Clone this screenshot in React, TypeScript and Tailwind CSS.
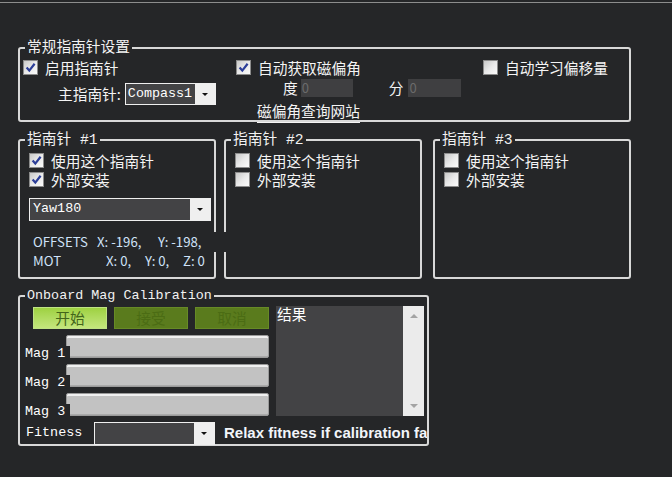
import type { ReactNode } from 'react'

const cjk = "font-['Noto_Sans_CJK_SC',sans-serif]"
const mono = "font-['Liberation_Mono','Noto_Sans_CJK_SC',monospace]"

const Check = ({ on = false }: { on?: boolean }) => (
	<span className="flex size-[15px] shrink-0 items-center justify-center border border-[#8c8c8c] bg-linear-to-br from-[#c9c9c9] via-[#e9e9e9] to-[#fbfbfb]">
		{on && (
			<svg width="11" height="11" viewBox="0 0 11 11">
				<path d="M1.6 5.6 L4.3 8.6 L9.6 1.8" fill="none" stroke="#2c3e98" strokeWidth="2.2" />
			</svg>
		)}
	</span>
)

const CheckRow = ({ on, children }: { on?: boolean; children: ReactNode }) => (
	<label className="flex h-[15px] items-center gap-[7px] leading-[16px]">
		<Check on={on} />
		<span className="whitespace-nowrap">{children}</span>
	</label>
)

const Arrow = () => (
	<span className="flex w-[20px] shrink-0 items-center justify-center bg-[#efefef]">
		<svg width="6" height="3" viewBox="0 0 6 3">
			<path d="M0 0h6L3 3z" fill="#111" />
		</svg>
	</span>
)

const Combo = ({ text, className, pad = 'pl-[2px]' }: { text?: string; className: string; pad?: string }) => (
	<div className={`flex border border-[#efefef] bg-[#434345] ${className}`}>
		<span className={`flex flex-1 items-center text-[13.4px] text-white ${mono} ${pad}`}>{text}</span>
		<Arrow />
	</div>
)

const Group = ({
	title,
	className,
	legend = 'text-[14.7px]',
	children,
}: {
	title: ReactNode
	className: string
	legend?: string
	children: ReactNode
}) => (
	<fieldset className={`min-w-0 shrink-0 rounded-[3px] border-2 border-[#d8d8d8] ${className}`}>
		<legend className={`ml-[5px] px-[2px] leading-[18px] whitespace-pre text-[#f2f2f2] ${mono} ${legend}`}>{title}</legend>
		{children}
	</fieldset>
)

const Compass = ({ n }: { n: number }) => (
	<Group title={`指南针 #${n}`} className={`h-[148px] w-[198px] ${n === 2 ? 'ml-[8px]' : n === 3 ? 'ml-[11px]' : ''}`}>
		<div className="flex flex-col gap-[4px] pt-[4px] pl-[9px]">
			<CheckRow on={n === 1}>使用这个指南针</CheckRow>
			<CheckRow on={n === 1}>外部安装</CheckRow>
		</div>
		{n === 1 && (
			<div className="pl-[9px]">
				<Combo text="Yaw180" className="mt-[11px] h-[23px] w-[182px]" pad="pl-[3px]" />
				<div className="mt-[11px] text-[13.2px] text-[#cfe2f8]">
					<div className="relative z-10 flex h-[20px] w-[201px] bg-[#252628] pl-[4px] leading-[20px] whitespace-nowrap">
						<span className="w-[64px]">OFFSETS</span>
						<span className="w-[61px]">X: -196,</span>
						<span>Y: -198,</span>
					</div>
					<div className="flex pl-[4px] leading-[18px] whitespace-nowrap">
						<span className="w-[73px]">MOT</span>
						<span className="w-[39px]">X: 0,</span>
						<span className="w-[38px]">Y: 0,</span>
						<span>Z: 0</span>
					</div>
				</div>
			</div>
		)}
	</Group>
)

const MagRow = ({ n }: { n: number }) => (
	<div className="mt-[6px] flex items-end">
		<span className={`relative z-10 -mb-[4px] w-[45px] bg-[#252628] text-[13.4px] leading-[16px] text-white ${mono}`}>Mag {n}</span>
		<div className="-ml-[4px] h-[23px] w-[203px] rounded-[2px] border border-[#9a9a9a] bg-[#c2c2c2] shadow-[inset_0_2px_0_#f0f0f0,inset_0_-1px_0_#a9a9a9]" />
	</div>
)

export default function App() {
	return (
		<div className={`h-[477px] w-[672px] overflow-hidden bg-[#252628] pt-[2px] text-[14.7px] text-[#f4f4f4] ${cjk}`}>
			<div className="h-px bg-[#8d8d8d]" />
			<div className="pl-[18px]">
				<Group title="常规指南针设置" className="mt-[36px] w-[613px]">
					<div className="grid h-[63px] grid-cols-[213px_247px_1fr] pt-[3px] pl-[3px]">
						<div>
							<CheckRow on>启用指南针</CheckRow>
							<div className="mt-[8px] flex items-center pl-[35px]">
								<span className="leading-[16px]">主指南针:</span>
								<Combo text="Compass1" className="ml-[4px] h-[22px] w-[91px]" />
							</div>
						</div>
						<div>
							<CheckRow on>自动获取磁偏角</CheckRow>
							<div className="mt-[4px] flex h-[18px] items-center pl-[47px]">
								<span className="leading-[16px]">度</span>
								<span className="ml-[3px] flex h-[18px] w-[52px] items-center bg-[#3f3f41] pl-[1px] text-[13px] text-[#6b6b6b]">0</span>
								<span className="ml-[36px] leading-[16px]">分</span>
								<span className="ml-[5px] flex h-[18px] w-[53px] items-center bg-[#3f3f41] pl-[1px] text-[13px] text-[#6b6b6b]">0</span>
							</div>
							<div className="mt-[6px] pl-[21px] leading-[16px]">
								<span className="border-b border-[#f4f4f4] pb-[1px]">磁偏角查询网站</span>
							</div>
						</div>
						<div>
							<CheckRow>自动学习偏移量</CheckRow>
						</div>
					</div>
				</Group>

				<div className="mt-[9px] flex">
					<Compass n={1} />
					<Compass n={2} />
					<Compass n={3} />
				</div>

				<Group title="Onboard Mag Calibration" legend="text-[13.4px]" className="mt-[8px] w-[411px]">
					<div className="h-[139px] pt-[1px] pl-[5px]">
						<div className="flex">
							<div className="w-[244px]">
								<div className="mt-[1px] flex gap-[7px] pl-[8px]">
									<button className="h-[22px] w-[74px] border border-[#bfe383] bg-linear-to-b from-[#9ed140] to-[#c4e67c] leading-[16px] text-[#43661a]">开始</button>
									<button className="h-[22px] w-[74px] border border-[#678a26] bg-[#5a7b1d] leading-[16px] text-[#4b6c14]">接受</button>
									<button className="h-[22px] w-[74px] border border-[#678a26] bg-[#5a7b1d] leading-[16px] text-[#4b6c14]">取消</button>
								</div>
								<MagRow n={1} />
								<MagRow n={2} />
								<MagRow n={3} />
							</div>
							<div className="ml-[7px] flex h-[110px]">
								<div className="w-[127px] bg-[#434345] pl-[1px] leading-[16px] text-white">结果</div>
								<div className="flex w-[21px] flex-col items-center justify-between bg-[#ebebeb] py-[8px]">
									<svg width="8" height="4" viewBox="0 0 8 4">
										<path d="M0 4h8L4 0z" fill="#a3a3a3" />
									</svg>
									<svg width="8" height="4" viewBox="0 0 8 4">
										<path d="M0 0h8L4 4z" fill="#a3a3a3" />
									</svg>
								</div>
							</div>
						</div>
						<div className="mt-[6px] flex h-[23px] w-[402px] items-center overflow-hidden">
							<span className={`w-[69px] shrink-0 pl-[1px] text-[13.4px] text-white ${mono}`}>Fitness</span>
							<Combo className="h-[23px] w-[121px] shrink-0" />
							<span className="ml-[9px] font-['Liberation_Sans',Arial,sans-serif] text-[15px] font-bold whitespace-nowrap text-[#f2f5fa]">
								Relax fitness if calibration fails
							</span>
						</div>
					</div>
				</Group>
			</div>
		</div>
	)
}
